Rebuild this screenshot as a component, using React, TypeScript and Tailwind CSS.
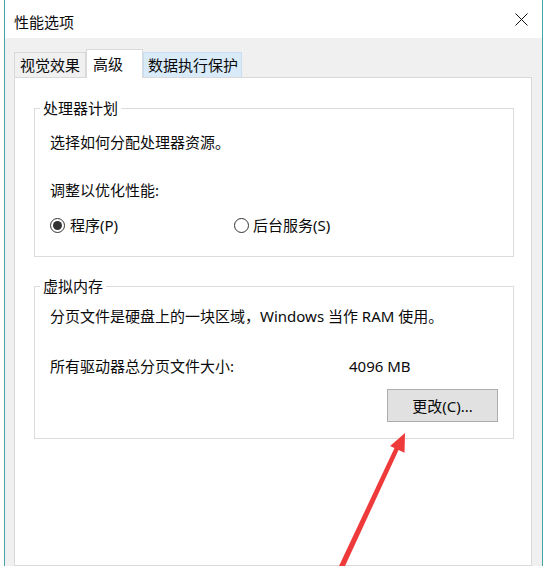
import React from "react";

function Radio({ checked }: { checked: boolean }) {
  return (
    <span className="w-[15px] h-[15px] rounded-full border border-[#333333] bg-white flex items-center justify-center shrink-0">
      {checked && <span className="w-[9px] h-[9px] rounded-full bg-[#333333]" />}
    </span>
  );
}

export default function App() {
  return (
    <div className="relative w-[547px] h-[566px] overflow-hidden bg-white text-[15px] leading-[20px] text-[#0a0a0a] font-['Noto_Sans','Noto_Sans_CJK_SC',sans-serif]">
      <div className="ml-[4px] w-[539px] h-full border-x border-[#45a3aa] flex flex-col">
        {/* Title bar */}
        <div className="h-[38px] bg-white flex items-start justify-between pl-[9px] pr-[14px] shrink-0">
          <span className="mt-[12px]">性能选项</span>
          <svg className="mt-[13px]" width="13" height="13" viewBox="0 0 13 13">
            <path d="M0.5 0.5 L12.5 12.5 M12.5 0.5 L0.5 12.5" stroke="#111" strokeWidth="1" fill="none" />
          </svg>
        </div>
        {/* Body */}
        <div className="flex-1 bg-[#f0f0f0] pt-[11px] pl-[9px] pr-[10px] flex flex-col">
          {/* Tabs */}
          <div className="flex items-end h-[28px]">
            <div className="w-[72px] h-[25px] border border-b-0 border-[#d9d9d9] bg-[#f0f0f0] flex items-center justify-center">
              视觉效果
            </div>
            <div className="relative z-10 w-[57px] h-[29px] -mb-px border border-b-0 border-[#d9d9d9] bg-white flex items-center pl-[6px]">
              高级
            </div>
            <div className="w-[99px] h-[25px] border border-b-0 border-[#c9def2] bg-[#d9eaf9] flex items-center pl-[4px]">
              数据执行保护
            </div>
          </div>
          {/* Panel */}
          <div className="flex-1 bg-white border border-[#d9d9d9] pt-[20px]">
            <fieldset className="ml-[19px] w-[480px] border border-[#dcdcdc] px-[15px] pb-[21px]">
              <legend className="ml-[-10px] px-[3px]">处理器计划</legend>
              <div className="mt-[14px]">选择如何分配处理器资源。</div>
              <div className="mt-[28px]">调整以优化性能:</div>
              <div className="mt-[15px] flex items-center">
                <div className="w-[184px] flex items-center gap-[5px]">
                  <Radio checked />
                  <span>程序(P)</span>
                </div>
                <div className="flex items-center gap-[4px]">
                  <Radio checked={false} />
                  <span>后台服务(S)</span>
                </div>
              </div>
            </fieldset>
            <fieldset className="mt-[19px] ml-[19px] w-[480px] border border-[#dcdcdc] px-[15px] pb-[16px]">
              <legend className="ml-[-10px] px-[3px]">虚拟内存</legend>
              <div className="mt-[10px]">分页文件是硬盘上的一块区域，Windows 当作 RAM 使用。</div>
              <div className="mt-[30px] flex">
                <span className="w-[299px]">所有驱动器总分页文件大小:</span>
                <span>4096 MB</span>
              </div>
              <div className="mt-[13px] flex justify-end">
                <button className="w-[111px] h-[33px] bg-[#e1e1e1] border border-[#adadad] flex items-center justify-center">
                  更改(C)...
                </button>
              </div>
            </fieldset>
          </div>
        </div>
      </div>
      {/* Red annotation arrow */}
      <svg className="absolute inset-0 pointer-events-none" width="547" height="566" viewBox="0 0 547 566">
        <path d="M339 566 L345 566 L399 449 L395 447 Z" fill="#ee3a3a" />
        <polygon points="405,433 404.5,452.7 390.1,445.9" fill="#ee3a3a" />
      </svg>
    </div>
  );
}
